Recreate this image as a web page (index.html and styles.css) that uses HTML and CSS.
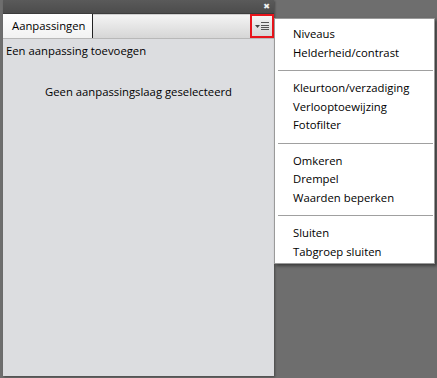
FILE: index.html
```html
<!DOCTYPE html>
<html lang="nl">
  <head>
    <meta charset="UTF-8" />
    <title>Aanpassingen</title>
    <link rel="stylesheet" href="styles.css">
  </head>
  <body>
    <div class="panel">
      <div class="titlebar">
        <span class="close">&#x2716;</span>
      </div>
      <div class="tabbar">
        <div class="tab">Aanpassingen</div>
        <div class="tabfill"></div>
        <div class="menubtn">
          <svg width="14" height="9" viewBox="0 0 14 9">
            <path d="M0 3h5l-2.5 3z" fill="#444" />
            <rect x="6" y="0" width="8" height="1" fill="#555" />
            <rect x="6" y="3" width="8" height="1" fill="#555" />
            <rect x="6" y="5" width="8" height="1" fill="#555" />
            <rect x="6" y="7" width="8" height="1" fill="#555" />
          </svg>
        </div>
      </div>
      <div class="body">
        <div class="add">Een aanpassing toevoegen</div>
        <div class="empty">Geen aanpassingslaag geselecteerd</div>
      </div>
    </div>

    <!-- flyout menu -->
    <ul class="menu">
      <li>Niveaus</li>
      <li>Helderheid/contrast</li>
      <li class="sep"></li>
      <li>Kleurtoon/verzadiging</li>
      <li>Verlooptoewijzing</li>
      <li>Fotofilter</li>
      <li class="sep"></li>
      <li>Omkeren</li>
      <li>Drempel</li>
      <li>Waarden beperken</li>
      <li class="sep"></li>
      <li>Sluiten</li>
      <li>Tabgroep sluiten</li>
    </ul>
  </body>
</html>
```

FILE: styles.css
```css
body {
  margin: 0;
  background-color: #6e6e6e;
  font-family: "Open Sans", "Noto Sans", sans-serif;
  font-size: 11.3px;
  color: #000;
  height: 378px;
  overflow: hidden;
  position: relative;
}
.panel {
  margin-left: 3px;
  width: 271px;
  height: 376px;
  display: flex;
  flex-direction: column;
  background-color: #dcdde0;
  box-shadow: 1px 1px 2px rgba(0, 0, 0, 0.35);
}
.titlebar {
  height: 13px;
  background: linear-gradient(#5a5a5a, #4c4c4c);
  border-bottom: 1px solid #3c3c3c;
  display: flex;
  justify-content: flex-end;
  align-items: center;
  padding-right: 4px;
}
.close {
  color: #f2f2f2;
  font-size: 8px;
  font-family: "DejaVu Sans", sans-serif;
  font-weight: bold;
}
.tabbar {
  height: 24px;
  display: flex;
  border-bottom: 1px solid #b8b8b8;
}
.tab {
  width: 80px;
  padding-left: 9px;
  line-height: 24px;
  background: linear-gradient(#ffffff, #f2f2f2);
  border-right: 1px solid #222;
}
.tabfill {
  flex: 1;
  background: linear-gradient(#f4f4f4, #d6d6d6);
  border-top: 1px solid #cfcfcf;
}
.menubtn {
  width: 20px;
  height: 20px;
  border: 2px solid #e8141b;
  display: flex;
  align-items: center;
  justify-content: center;
  background: linear-gradient(#f4f4f4, #d6d6d6);
}
.body {
  flex: 1;
  padding: 3px 3px;
}
.add {
  line-height: 17px;
}
.empty {
  text-align: center;
  margin-top: 25px;
}
.menu {
  position: absolute;
  left: 274px;
  top: 18px;
  width: 159px;
  margin: 0;
  padding: 6px 0 2px;
  list-style: none;
  background-color: #ffffff;
  border: 1px solid #9a9a9a;
  box-shadow: 2px 2px 3px rgba(0, 0, 0, 0.45);
}
.menu li {
  padding-left: 18px;
  line-height: 18.5px;
}
.menu .sep {
  height: 1px;
  margin: 8px 1px 8px 3px;
  background-color: #a0a0a0;
  line-height: 0;
}
```
